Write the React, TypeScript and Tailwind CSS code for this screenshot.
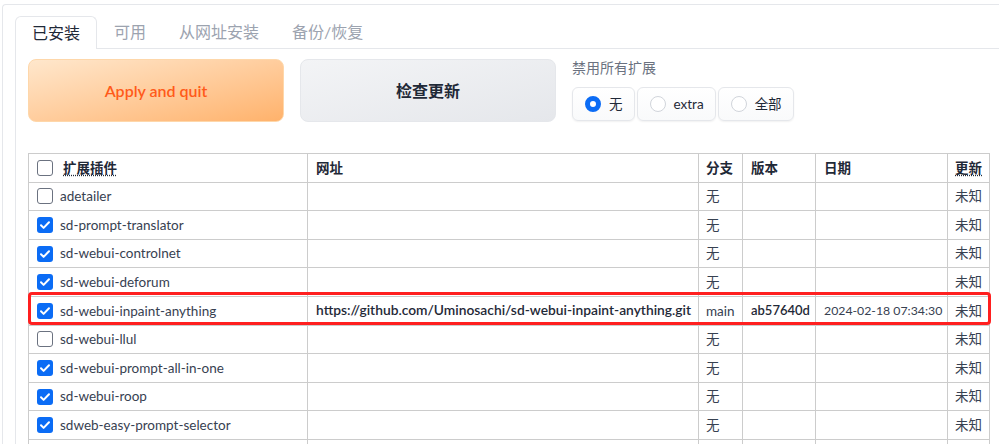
import React from "react";

const font = { fontFamily: '"Source Sans Pro", Lato, "Noto Sans CJK SC", sans-serif' };

type Row = {
  name: string;
  checked: boolean;
  url?: string;
  branch: string;
  version?: string;
  date?: string;
};

const rows: Row[] = [
  { name: "adetailer", checked: false, branch: "无" },
  { name: "sd-prompt-translator", checked: true, branch: "无" },
  { name: "sd-webui-controlnet", checked: true, branch: "无" },
  { name: "sd-webui-deforum", checked: true, branch: "无" },
  {
    name: "sd-webui-inpaint-anything",
    checked: true,
    url: "https://github.com/Uminosachi/sd-webui-inpaint-anything.git",
    branch: "main",
    version: "ab57640d",
    date: "2024-02-18 07:34:30",
  },
  { name: "sd-webui-llul", checked: false, branch: "无" },
  { name: "sd-webui-prompt-all-in-one", checked: true, branch: "无" },
  { name: "sd-webui-roop", checked: true, branch: "无" },
  { name: "sdweb-easy-prompt-selector", checked: true, branch: "无" },
  { name: "", checked: false, branch: "" },
];

function Checkbox({ checked }: { checked: boolean }) {
  if (checked) {
    return (
      <span className="inline-flex h-4 w-4 shrink-0 items-center justify-center rounded-[3px] bg-[#0b6cf5]">
        <svg viewBox="0 0 16 16" className="h-4 w-4" fill="none">
          <path d="M4 8.3l2.6 2.6L12 5.3" stroke="white" strokeWidth="2" strokeLinecap="round" strokeLinejoin="round" />
        </svg>
      </span>
    );
  }
  return <span className="inline-block h-4 w-4 shrink-0 rounded-[3px] border border-[#6b7280] bg-white" />;
}

function Radio({ label, selected }: { label: string; selected?: boolean }) {
  return (
    <div className="flex h-[34px] items-center gap-2 rounded-md border border-[#e5e7eb] bg-gradient-to-b from-white to-[#f9fafb] pl-[12px] pr-[11px] shadow-[0_1px_2px_rgba(0,0,0,0.06)]">
      {selected ? (
        <span className="inline-block h-4 w-4 rounded-full border-[5px] border-[#0b6cf5] bg-white" />
      ) : (
        <span className="inline-block h-4 w-4 rounded-full border border-[#d1d5db] bg-white" />
      )}
      <span className="text-[13.5px] text-[#1f2937]">{label}</span>
    </div>
  );
}

const th = "whitespace-nowrap border border-[#cccccc] px-2 text-left font-semibold text-[#1f2937]";
const td = "whitespace-nowrap border border-[#cccccc] px-2";

export default function App() {
  return (
    <div className="h-[444px] w-[999px] overflow-hidden bg-white pl-[2px] pt-[4px]" style={font}>
      <div className="h-full rounded-tl-[4px] border-l border-t border-[#e5e7eb] pl-[12px] pt-[10px]">
        {/* tabs */}
        <div className="flex h-[33px] items-end gap-[1px]">
          <div className="relative z-10 -mb-px flex h-[33px] items-center rounded-t-[6px] border border-b-0 border-[#e5e7eb] bg-white px-[16px] text-[16px] text-[#1f2937]">
            已安装
          </div>
          <div className="flex h-[33px] items-center px-[16px] text-[16px] text-[#9ca3af]">可用</div>
          <div className="flex h-[33px] items-center px-[16px] text-[16px] text-[#9ca3af]">从网址安装</div>
          <div className="flex h-[33px] items-center px-[16px] text-[16px] text-[#9ca3af]">备份/恢复</div>
        </div>
        {/* panel */}
        <div className="relative h-full border-l border-t border-[#e5e7eb] pl-[12px] pt-[10px]">
          <div className="flex items-start gap-4">
            <button className="flex h-[63px] w-[256px] items-center justify-center rounded-[8px] border border-[#fed7aa] bg-gradient-to-br from-[#ffe7cc] to-[#ffb26b] text-[16px] font-semibold text-[#ff5a1a]">
              Apply and quit
            </button>
            <button className="flex h-[63px] w-[256px] items-center justify-center rounded-[8px] border border-[#e5e7eb] bg-gradient-to-br from-[#f3f4f6] to-[#e5e7eb] text-[16px] font-semibold text-[#1f2937]">
              检查更新
            </button>
            <div className="flex flex-col">
              <div className="text-[14px] leading-[18px] text-[#6b7280]">禁用所有扩展</div>
              <div className="mt-[10px] flex gap-[2px]">
                <Radio label="无" selected />
                <Radio label="extra" />
                <Radio label="全部" />
              </div>
            </div>
          </div>

          {/* table */}
          <div className="relative mt-[31px] w-[961px]">
            <table className="w-[961px] table-fixed border-collapse text-[13.5px] text-[#374151]">
              <colgroup>
                <col className="w-[279px]" />
                <col className="w-[391px]" />
                <col className="w-[44px]" />
                <col className="w-[73px]" />
                <col className="w-[132px]" />
                <col className="w-[42px]" />
              </colgroup>
              <thead>
                <tr className="h-[28.6px]">
                  <th className={th}>
                    <div className="flex items-center gap-[10px]">
                      <Checkbox checked={false} />
                      <span className="underline decoration-dotted underline-offset-2">扩展插件</span>
                    </div>
                  </th>
                  <th className={th}>网址</th>
                  <th className={th + " !px-[7px]"}>分支</th>
                  <th className={th}>版本</th>
                  <th className={th}>日期</th>
                  <th className={th + " !px-[7px]"}>
                    <span className="underline decoration-dotted underline-offset-2">更新</span>
                  </th>
                </tr>
              </thead>
              <tbody>
                {rows.map((r, i) => (
                  <tr key={i} className="h-[28.6px]">
                    <td className={td}>
                      {r.name && (
                        <div className="flex items-center gap-[7px]">
                          <Checkbox checked={r.checked} />
                          <span>{r.name}</span>
                        </div>
                      )}
                    </td>
                    <td className={td + " text-[13.8px] font-semibold text-[#1f2937]"}>{r.url ?? ""}</td>
                    <td className={td + " !px-[7px]"}>{r.branch}</td>
                    <td className={td + " text-[13px] font-semibold text-[#1f2937]"}>{r.version ?? ""}</td>
                    <td className={td + " text-[12.3px]"}>{r.date ?? ""}</td>
                    <td className={td + " !px-[7px]"}>{r.name ? "未知" : ""}</td>
                  </tr>
                ))}
              </tbody>
            </table>
            {/* red highlight */}
            <div className="pointer-events-none absolute left-0 top-[139px] h-[33px] w-[963px] rounded-[4px] border-[3px] border-[#ff1f1f]" />
          </div>
        </div>
      </div>
    </div>
  );
}
